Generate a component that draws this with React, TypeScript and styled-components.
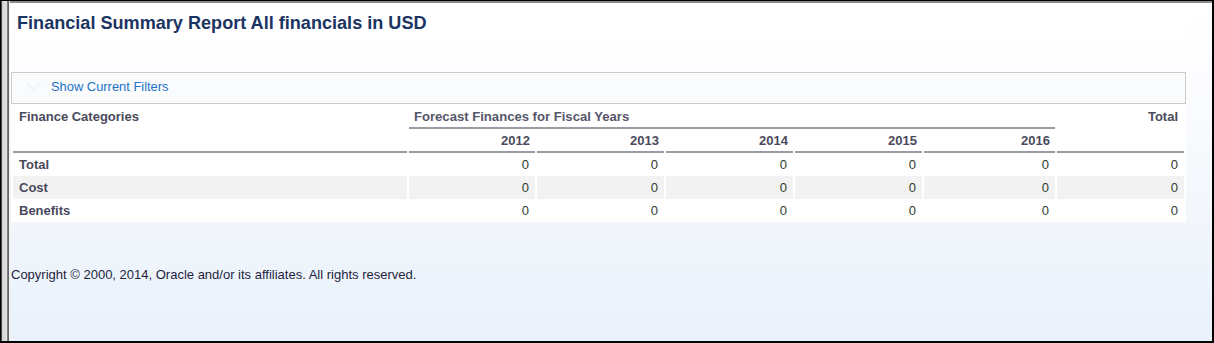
import styled, { createGlobalStyle } from "styled-components";

const GlobalStyle = createGlobalStyle`
  html, body {
    margin: 0;
    padding: 0;
    background: #ffffff;
  }
  body {
    font-family: "Liberation Sans", Arial, sans-serif;
  }
`;

const years = ["2012", "2013", "2014", "2015", "2016"];

const rows = [
  { label: "Total", values: [0, 0, 0, 0, 0], total: 0 },
  { label: "Cost", values: [0, 0, 0, 0, 0], total: 0 },
  { label: "Benefits", values: [0, 0, 0, 0, 0], total: 0 },
];

const App = () => {
  return (
    <>
      <GlobalStyle />
      <Frame>
        <LeftRail />
        <Main>
          <TitleBox>
            <Title>Financial Summary Report All financials in USD</Title>
          </TitleBox>

          <FilterBar>
            <FilterIcon width="16" height="12" viewBox="0 0 16 12">
              <path d="M1 2 L8 9 L15 2" fill="none" stroke="#f1f4f9" strokeWidth="3" />
            </FilterIcon>
            <FilterLink>Show Current Filters</FilterLink>
          </FilterBar>

          <Table>
            <colgroup>
              <col style={{ width: 394 }} />
              <col style={{ width: 126 }} />
              <col style={{ width: 127 }} />
              <col style={{ width: 127 }} />
              <col style={{ width: 127 }} />
              <col style={{ width: 131 }} />
              <col style={{ width: 127 }} />
            </colgroup>
            <thead>
              <tr>
                <HeadCell rowSpan={2} $align="left">
                  Finance Categories
                </HeadCell>
                <GroupCell colSpan={5}>Forecast Finances for Fiscal Years</GroupCell>
                <HeadCell rowSpan={2} $align="right">
                  Total
                </HeadCell>
              </tr>
              <tr>
                {years.map((y) => (
                  <YearCell key={y}>{y}</YearCell>
                ))}
              </tr>
            </thead>
            <tbody>
              {rows.map((r, i) => (
                <DataRow key={r.label} $shaded={i === 1}>
                  <LabelCell>{r.label}</LabelCell>
                  {r.values.map((v, j) => (
                    <NumCell key={j}>{v}</NumCell>
                  ))}
                  <NumCell>{r.total}</NumCell>
                </DataRow>
              ))}
            </tbody>
          </Table>

          <Footer>Copyright © 2000, 2014, Oracle and/or its affiliates. All rights reserved.</Footer>
        </Main>
      </Frame>
    </>
  );
};

export default App;

// 스타일
const Frame = styled.div`
  box-sizing: border-box;
  width: 1214px;
  height: 343px;
  display: flex;
  border: 1px solid #000;
  border-bottom: 2px solid #000;
  border-right: 2px solid #000;
  overflow: hidden;
`;

const LeftRail = styled.div`
  flex: 0 0 9px;
  background: linear-gradient(
    to right,
    #3a3a3a 0px,
    #555555 1px,
    #d4d4d4 1px,
    #e2e2e2 6px,
    #8a8a8a 6px,
    #5a5a5a 8px,
    #f0f0f0 8px
  );
`;

const Main = styled.div`
  flex: 1;
  display: flex;
  flex-direction: column;
  border-top: 2px solid #8c8c8c;
  background: linear-gradient(to bottom, #ffffff 0px, #fbfcfe 90px, #f3f7fc 200px, #e9f1fa 340px);
`;

const TitleBox = styled.div`
  width: 1176px;
  height: 36px;
  box-sizing: border-box;
  background: #ffffff;
  padding: 10px 0 0 7px;
`;

const Title = styled.h1`
  margin: 0;
  font-size: 18.1px;
  font-weight: bold;
  line-height: 21px;
  color: #1b3462;
`;

const FilterBar = styled.div`
  box-sizing: border-box;
  width: 1175px;
  height: 32px;
  margin: 33px 0 0 1px;
  display: flex;
  align-items: center;
  gap: 9px;
  padding: 0 0 3px 14px;
  border: 1px solid #cccccc;
  background: #f9fbfd;
`;

const FilterIcon = styled.svg`
  display: block;
`;

const FilterLink = styled.span`
  font-size: 12.9px;
  color: #1f73c6;
  cursor: pointer;
`;

const Table = styled.table`
  width: 1175px;
  margin-left: 1px;
  table-layout: fixed;
  border-collapse: separate;
  border-spacing: 2px 0;
  background: #ffffff;
  font-size: 13px;
  color: #4a4a5c;
`;

const HeadCell = styled.th<{ $align: "left" | "right" }>`
  text-align: ${(p) => p.$align};
  vertical-align: top;
  font-weight: bold;
  padding: ${(p) => (p.$align === "left" ? "5px 0 0 6px" : "5px 6px 0 0")};
  line-height: 15px;
  border-bottom: 2px solid #9a9ca4;
`;

const GroupCell = styled.th`
  text-align: left;
  font-weight: bold;
  font-size: 13.1px;
  color: #56566a;
  padding: 5px 0 3px 5px;
  vertical-align: top;
  line-height: 15px;
  border-bottom: 2px solid #9a9ca4;
`;

const YearCell = styled.th`
  text-align: right;
  font-weight: bold;
  padding: 4px 5px 3px 0;
  line-height: 15px;
  border-bottom: 2px solid #9a9ca4;
`;

const DataRow = styled.tr<{ $shaded: boolean }>`
  td {
    background: ${(p) => (p.$shaded ? "#f2f2f2" : "#ffffff")};
  }
`;

const LabelCell = styled.td`
  height: 23px;
  padding: 0 0 0 6px;
  font-weight: bold;
  line-height: 15px;
  color: #4a4a5c;
`;

const NumCell = styled.td`
  height: 23px;
  padding: 0 6px 0 0;
  text-align: right;
  line-height: 15px;
  color: #2e3a2e;
`;

const Footer = styled.div`
  margin-top: 45px;
  margin-left: 1px;
  font-size: 13px;
  color: #1e1e40;
  line-height: 15px;
`;
